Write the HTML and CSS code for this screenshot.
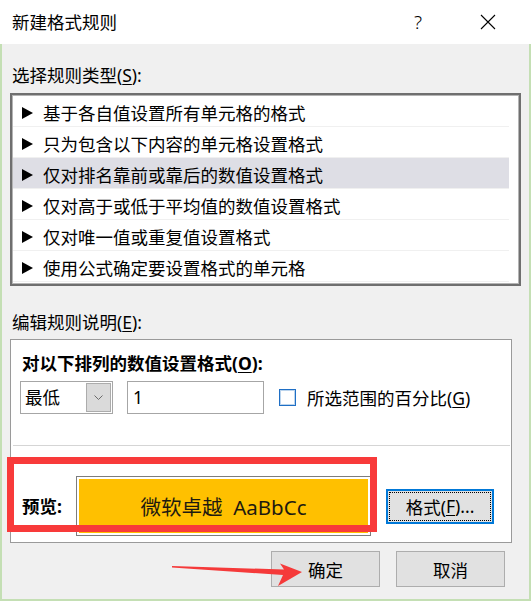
FILE: index.html
```html
<!DOCTYPE html>
<html lang="zh-CN">
<head>
<meta charset="utf-8">
<title>新建格式规则</title>
<link rel="stylesheet" href="styles.css">
</head>
<body>
<div class="window">
  <div class="titlebar">
    <span class="title">新建格式规则</span>
    <span class="help">?</span>
    <span class="close"><svg width="16" height="16" viewBox="0 0 16 16"><path d="M1 1L15 15M15 1L1 15" stroke="#000" stroke-width="1.1" fill="none"/></svg></span>
  </div>
  <div class="content">
    <div class="label label-type">选择规则类型(<u>S</u>):</div>
    <ul class="rule-list">
      <li class="rule"><svg class="tri" viewBox="0 0 11 12"><polygon points="0,0 11,6 0,12" fill="#000"/></svg><span>基于各自值设置所有单元格的格式</span></li>
      <li class="rule"><svg class="tri" viewBox="0 0 11 12"><polygon points="0,0 11,6 0,12" fill="#000"/></svg><span>只为包含以下内容的单元格设置格式</span></li>
      <li class="rule selected"><svg class="tri" viewBox="0 0 11 12"><polygon points="0,0 11,6 0,12" fill="#000"/></svg><span>仅对排名靠前或靠后的数值设置格式</span></li>
      <li class="rule"><svg class="tri" viewBox="0 0 11 12"><polygon points="0,0 11,6 0,12" fill="#000"/></svg><span>仅对高于或低于平均值的数值设置格式</span></li>
      <li class="rule"><svg class="tri" viewBox="0 0 11 12"><polygon points="0,0 11,6 0,12" fill="#000"/></svg><span>仅对唯一值或重复值设置格式</span></li>
      <li class="rule"><svg class="tri" viewBox="0 0 11 12"><polygon points="0,0 11,6 0,12" fill="#000"/></svg><span>使用公式确定要设置格式的单元格</span></li>
    </ul>
    <div class="label label-edit">编辑规则说明(<u>E</u>):</div>
    <div class="edit-box">
      <div class="edit-top">
        <div class="bold-label">对以下排列的数值设置格式(<u>O</u>):</div>
        <div class="controls">
          <div class="select"><span class="select-text">最低</span><span class="select-btn"><svg width="9" height="5" viewBox="0 0 9 5"><polyline points="0.5,0.5 4.5,4.5 8.5,0.5" stroke="#6a6a6a" stroke-width="1" fill="none"/></svg></span></div>
          <div class="input">1</div>
          <div class="check"><span class="box"></span><span class="check-text">所选范围的百分比(<u>G</u>)</span></div>
        </div>
      </div>
      <div class="sep"></div>
      <div class="edit-bottom">
        <div class="preview-row">
          <span class="bold-label preview-label">预览:</span>
          <div class="preview"><div class="preview-fill">微软卓越&nbsp;&nbsp;AaBbCc</div></div>
          <button class="btn btn-format"><span class="focus">格式(<u>F</u>)...</span></button>
        </div>
      </div>
    </div>
    <div class="actions">
      <button class="btn">确定</button>
      <button class="btn">取消</button>
    </div>
  </div>
  <div class="annot-frame"></div>
  <svg class="annot-arrow" width="531" height="601" viewBox="0 0 531 601"><polygon points="172,566 284,569.5 280,563.5 302,572 278,586 283,575 172,567.4" fill="#f53a3a"/></svg>
</div>
</body>
</html>
```

FILE: styles.css
```css
html, body {
  margin: 0;
  padding: 0;
}
body {
  background: #f0f0f0;
  font-family: "Noto Sans", "Noto Sans CJK SC", sans-serif;
  font-size: 17.5px;
  color: #000;
}
.window {
  width: 531px;
  height: 601px;
  position: relative;
  overflow: hidden;
  display: flex;
  flex-direction: column;
}
.titlebar {
  height: 44px;
  flex: none;
  background: #fff;
  display: flex;
  align-items: center;
  box-sizing: border-box;
  padding: 0 20px 0 12px;
}
.title {
  flex: 1;
  line-height: 24px;
}
.help {
  width: 40px;
  text-align: center;
  font-size: 19px;
  font-weight: 300;
  line-height: 24px;
}
.close {
  width: 46px;
  margin-left: 27px;
  display: flex;
  justify-content: center;
}
.content {
  flex: 1;
  background: #f0f0f0;
  border: 2px solid #c4dfb4;
  border-top: 0;
  padding: 19px 8px 0 8px;
}
u {
  text-underline-offset: 2px;
  text-decoration-thickness: 1px;
}
.label {
  line-height: 24px;
  margin-left: 2px;
}
.rule-list {
  list-style: none;
  margin: 6px 0 0;
  padding: 1px 10px 0 1px;
  height: 193px;
  box-sizing: border-box;
  border: 2px solid #6f6f6f;
  box-shadow: inset 0 0 0 1px #b4b4b4;
  background: #fff;
}
.rule {
  height: 31px;
  box-sizing: border-box;
  border-bottom: 1px solid #f0f0f0;
  display: flex;
  align-items: center;
  padding: 4px 0 0 9px;
  line-height: 24px;
}
.rule.selected {
  background: #dedee5;
}
.tri {
  width: 11px;
  height: 12px;
  flex: none;
  margin-right: 10px;
}
.label-edit {
  margin-top: 24px;
}
.edit-box {
  margin-top: 5px;
  width: 502px;
  height: 204px;
  box-sizing: border-box;
  border: 1px solid #9a9a9a;
  background: #fff;
}
.edit-top {
  height: 105px;
  box-sizing: border-box;
  padding: 11px 0 0 9px;
}
.bold-label {
  font-weight: bold;
  line-height: 24px;
}
.edit-top .bold-label {
  margin-left: 2px;
}
.controls {
  margin-top: 6px;
  display: flex;
  align-items: center;
}
.select {
  width: 93px;
  height: 33px;
  box-sizing: border-box;
  border: 1px solid #a6a6a6;
  padding: 1px;
  display: flex;
  background: #fff;
}
.select-text {
  flex: 1;
  padding-left: 3px;
  line-height: 29px;
}
.select-btn {
  width: 25px;
  box-sizing: border-box;
  border: 1px solid #acacac;
  background: #dadada;
  display: flex;
  align-items: center;
  justify-content: center;
}
.input {
  margin-left: 14px;
  width: 137px;
  height: 33px;
  box-sizing: border-box;
  border: 1px solid #a6a6a6;
  padding-left: 5px;
  line-height: 31px;
}
.check {
  margin-left: 15px;
  display: flex;
  align-items: center;
}
.box {
  width: 17px;
  height: 17px;
  box-sizing: border-box;
  border: 1px solid #1f6fc5;
  box-shadow: inset 0 0 0 1px rgba(31, 111, 197, 0.3);
  background: #fff;
}
.check-text {
  margin-left: 11px;
  line-height: 24px;
}
.sep {
  height: 1px;
  background: #d5d5d5;
  margin: 0 1px 0 2px;
}
.edit-bottom {
  padding: 30px 0 0 11px;
}
.preview-row {
  height: 60px;
  display: flex;
  align-items: center;
}
.preview-label {
  width: 54px;
  flex: none;
}
.preview {
  width: 295px;
  height: 60px;
  box-sizing: border-box;
  border: 1px solid #7d7d7d;
  padding: 2px;
  background: #fff;
}
.preview-fill {
  height: 100%;
  background: #ffc000;
  display: flex;
  align-items: center;
  justify-content: center;
  font-size: 20.5px;
  color: #1d1a10;
}
.btn {
  width: 109px;
  height: 36px;
  box-sizing: border-box;
  border: 1px solid #adadad;
  background: #e1e1e1;
  font: inherit;
  color: #000;
  padding: 0;
  margin: 0;
}
.btn-format {
  margin-left: 15px;
  width: 108px;
  height: 35px;
  border: 2px solid #0078d7;
  padding: 1px;
}
.focus {
  display: flex;
  align-items: center;
  justify-content: center;
  height: 100%;
  box-sizing: border-box;
  border: 1px dotted #000;
}
.actions {
  margin-top: 8px;
  margin-right: 16px;
  display: flex;
  justify-content: flex-end;
  gap: 16px;
}
.annot-frame {
  position: absolute;
  left: 7px;
  top: 457px;
  width: 370px;
  height: 75px;
  box-sizing: border-box;
  border: 7px solid #f83a3a;
  pointer-events: none;
}
.annot-arrow {
  position: absolute;
  left: 0;
  top: 0;
  pointer-events: none;
}
```
